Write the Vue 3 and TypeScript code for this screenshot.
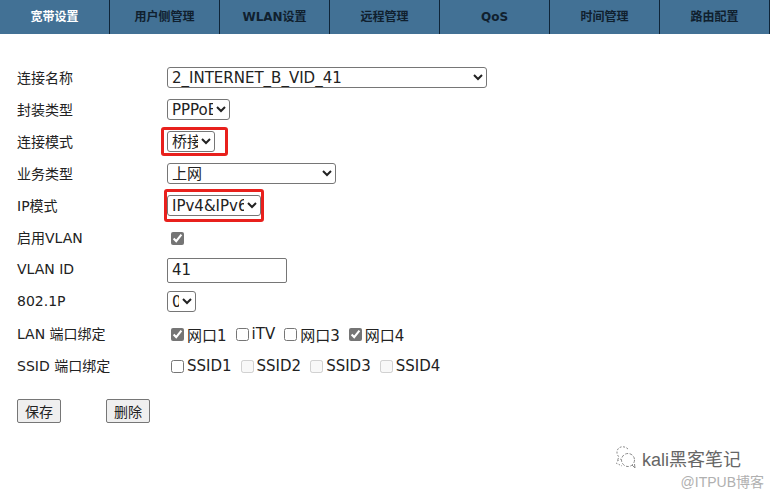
<template>
  <div class="page">
    <nav class="tabs">
      <a v-for="(t, i) in tabs" :key="t" class="tab" :class="{ active: i === 0 }">{{ t }}</a>
    </nav>

    <form class="form" @submit.prevent>
      <div class="row">
        <label>连接名称</label>
        <select class="w320"><option>2_INTERNET_B_VID_41</option></select>
      </div>
      <div class="row">
        <label>封装类型</label>
        <select class="w63"><option>PPPoE</option></select>
      </div>
      <div class="row">
        <label>连接模式</label>
        <span class="mark m1"><select class="w48"><option>桥接</option></select></span>
      </div>
      <div class="row">
        <label>业务类型</label>
        <select class="w169"><option>上网</option></select>
      </div>
      <div class="row">
        <label>IP模式</label>
        <span class="mark m2"><select class="w94"><option>IPv4&amp;IPv6</option></select></span>
      </div>
      <div class="row">
        <label>启用VLAN</label>
        <span class="checks"><input type="checkbox" checked /></span>
      </div>
      <div class="row">
        <label>VLAN ID</label>
        <input class="text" type="text" value="41" />
      </div>
      <div class="row">
        <label>802.1P</label>
        <select class="w29"><option>0</option></select>
      </div>
      <div class="row">
        <label>LAN 端口绑定</label>
        <span class="checks">
          <span v-for="c in lanPorts" :key="c.name" class="check">
            <input type="checkbox" :checked="c.on" />{{ c.name }}
          </span>
        </span>
      </div>
      <div class="row">
        <label>SSID 端口绑定</label>
        <span class="checks">
          <span v-for="(c, i) in ssids" :key="c" class="check">
            <input type="checkbox" :disabled="i > 0" />{{ c }}
          </span>
        </span>
      </div>
      <div class="actions">
        <button type="button">保存</button>
        <button type="button">删除</button>
      </div>
    </form>

    <div class="watermark">
      <div class="wm-line">
        <svg width="24" height="26" viewBox="0 0 24 26" fill="none" stroke="#8a8a8a" stroke-width="1">
          <path d="M14 4c-3-3-8-3-10 0-2 3-1 6 1 8l-2 4 4-2" stroke-dasharray="2 1.5" />
          <circle cx="14" cy="15" r="6.5" stroke-dasharray="3 1.5" />
          <path d="M18 20l3 3-.5-4" />
          <path d="M2 18l6 3" stroke-dasharray="1.5 1.5" />
        </svg>
        <span class="wm-name">kali黑客笔记</span>
      </div>
      <div class="wm-site">@ITPUB博客</div>
    </div>
  </div>
</template>

<script setup lang="ts">
const tabs: string[] = ['宽带设置', '用户侧管理', 'WLAN设置', '远程管理', 'QoS', '时间管理', '路由配置']

const lanPorts = [
  { name: '网口1', on: true },
  { name: 'iTV', on: false },
  { name: '网口3', on: false },
  { name: '网口4', on: true },
]

const ssids: string[] = ['SSID1', 'SSID2', 'SSID3', 'SSID4']
</script>

<style>
html,
body {
  margin: 0;
  background: #fff;
}
</style>

<style scoped>
.page {
  position: relative;
  width: 772px;
  height: 491px;
  overflow: hidden;
  color: #222;
  font-family: "DejaVu Sans", "Noto Sans CJK SC", sans-serif;
  font-size: 14px;
}

.tabs {
  display: flex;
  height: 34px;
  width: 770px;
}

.tab {
  flex: 0 0 110px;
  box-sizing: border-box;
  border-right: 1px solid #0e2438;
  background: #427195;
  color: #10202e;
  font-size: 12px;
  font-weight: 700;
  line-height: 35px;
  text-align: center;
}

.tab.active {
  color: #fff;
}

.form {
  padding: 28px 0 0 17px;
}

.row {
  display: flex;
  align-items: center;
  height: 32px;
}

.row label {
  flex: 0 0 150px;
  margin-top: -2px;
}

select {
  height: 21px;
  padding: 0;
  margin-top: -1px;
  font-family: "DejaVu Sans", "Noto Sans CJK SC", sans-serif;
  font-size: 15px;
  color: #222;
  background: #fff;
  border: 1px solid #767676;
  border-radius: 3px;
}

.w320 {
  width: 320px;
}

.w169 {
  width: 169px;
}

.w94 {
  width: 94px;
}

.w63 {
  width: 63px;
}

.w48 {
  width: 48px;
}

.w29 {
  width: 29px;
}

.mark {
  position: relative;
  display: inline-flex;
}

.mark::after {
  content: "";
  position: absolute;
  border: 3px solid #e8201c;
  border-radius: 3px;
  pointer-events: none;
}

.m1::after {
  top: -5px;
  bottom: -4px;
  left: -6px;
  right: -13px;
}

.m2::after {
  top: -7px;
  bottom: -6px;
  left: -3px;
  right: -3px;
}

.text {
  box-sizing: border-box;
  width: 120px;
  height: 25px;
  padding: 1px 4px;
  border: 1px solid #767676;
  border-radius: 2px;
  font-family: inherit;
  font-size: 15px;
  color: #222;
}

.checks {
  display: flex;
  gap: 9px;
  padding-left: 4px;
  font-size: 15px;
}

.check {
  display: inline-flex;
  align-items: center;
}

input[type="checkbox"] {
  width: 13px;
  height: 13px;
  margin: 0 3px 0 0;
  accent-color: #757575;
}

.actions {
  display: flex;
  gap: 45px;
  padding-top: 17px;
}

button {
  box-sizing: border-box;
  width: 44px;
  height: 24px;
  padding: 0;
  background: #efefef;
  border: 1px solid #767676;
  border-radius: 2px;
  font-family: inherit;
  font-size: 14px;
  color: #222;
}

.watermark {
  position: absolute;
  left: 614px;
  top: 445px;
  width: 150px;
}

.wm-line {
  display: flex;
  align-items: center;
  height: 26px;
  gap: 4px;
}

.wm-name {
  color: #666;
  font-family: "Liberation Sans", "Noto Sans CJK SC", sans-serif;
  font-size: 18px;
  white-space: nowrap;
}

.wm-site {
  color: #b0b0b0;
  font-family: "Liberation Sans", "Noto Sans CJK SC", sans-serif;
  font-size: 14px;
  text-align: right;
}
</style>
